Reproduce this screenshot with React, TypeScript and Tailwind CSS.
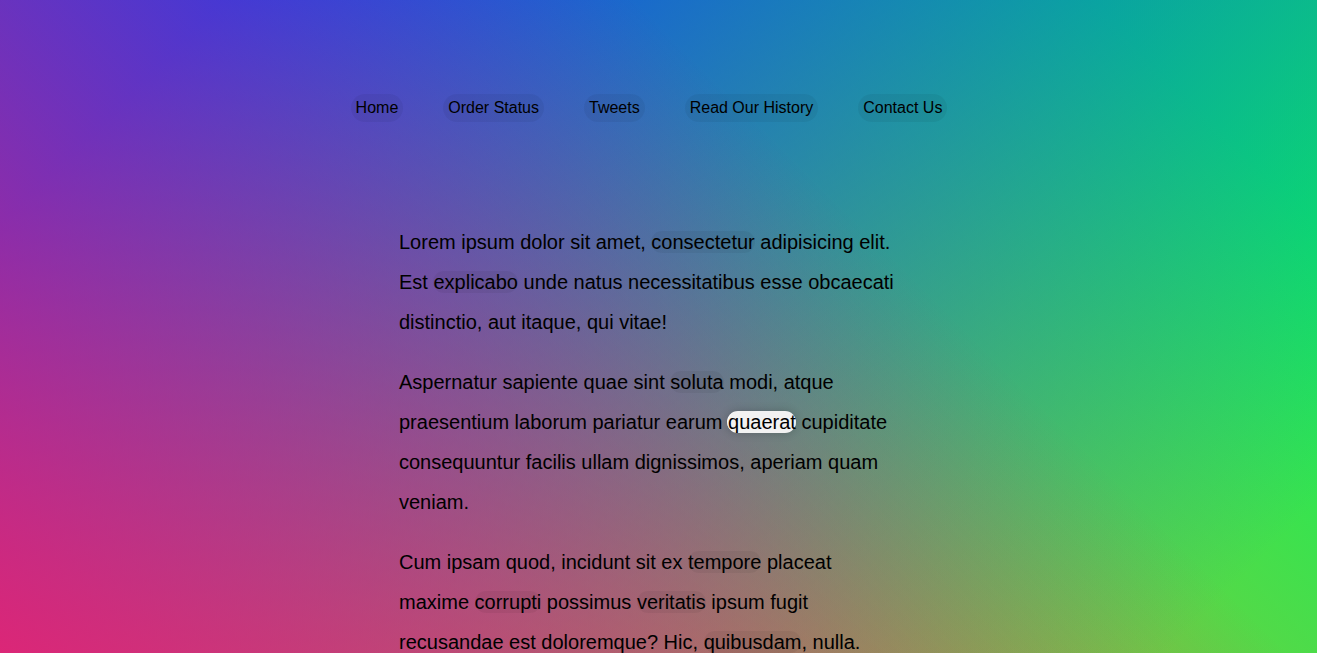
import React from "react";

const L = ({ children, hl }: { children: React.ReactNode; hl?: boolean }) => (
  <a href="#" className={hl ? "relative rounded-[20px] bg-black/5 text-black no-underline" : "rounded-[20px] bg-black/5 text-black no-underline"}>
    {hl && (
      <span className="absolute top-0 bottom-0 -left-px right-0 -z-10 block rounded-[20px] border-b-2 border-white bg-white shadow-[0_0_10px_rgba(0,0,0,0.2)]" />
    )}
    {children}
  </a>
);

export default function App() {
  const menu = ["Home", "Order Status", "Tweets", "Read Our History", "Contact Us"];
  return (
    <div className="h-[653px] w-full overflow-hidden font-['Liberation_Sans',Arial,sans-serif] text-black">
      <div className="relative isolate -mt-[6px] flow-root min-h-[659px] pt-[100px] pr-[19px] bg-[image:linear-gradient(45deg,hsla(340,100%,55%,1)_0%,hsla(340,100%,55%,0)_70%),linear-gradient(135deg,hsla(225,95%,50%,1)_10%,hsla(225,95%,50%,0)_80%),linear-gradient(225deg,hsla(140,90%,50%,1)_10%,hsla(140,90%,50%,0)_80%),linear-gradient(315deg,hsla(35,95%,55%,1)_100%,hsla(35,95%,55%,0)_70%)]">
        <nav>
          <ul className="mb-[100px] flex list-none justify-center p-0 text-[16px] leading-[normal]">
            {menu.map((m) => (
              <li key={m}>
                <a href="#" className="mx-5 inline-block rounded-[20px] bg-black/5 p-[5px] text-black no-underline">
                  {m}
                </a>
              </li>
            ))}
          </ul>
        </nav>
        <div className="relative mx-auto max-w-[500px] text-[20px] leading-[2]">
          <p className="my-5">
            Lorem ipsum dolor sit amet, <L>consectetur</L> adipisicing elit. Est <L>explicabo</L> unde natus necessitatibus esse obcaecati distinctio, aut itaque, qui vitae!
          </p>
          <p className="my-5">
            Aspernatur sapiente quae sint <L>soluta</L> modi, atque praesentium laborum pariatur earum <L hl>quaerat</L> cupiditate consequuntur facilis ullam dignissimos, aperiam quam veniam.
          </p>
          <p className="my-5">
            Cum ipsam quod, incidunt sit ex <L>tempore</L> placeat maxime <L>corrupti</L> possimus <L>veritatis</L> ipsum fugit recusandae est doloremque? Hic, <L>quibusdam</L>, nulla.
          </p>
          <p className="my-5">
            Esse quibusdam, ad, ducimus cupiditate <L>nulla</L>, quae magni odit <L>totam</L> ut consequatur eveniet sunt quam provident sapiente dicta neque quod.
          </p>
          <p className="my-5">
            Aliquam <L>dicta</L> sequi culpa fugiat <L>consequuntur</L> pariatur optio ad minima, maxime <L>odio</L>, distinctio magni impedit tempore enim repellendus <L>repudiandae</L> quas!
          </p>
        </div>
      </div>
    </div>
  );
}
